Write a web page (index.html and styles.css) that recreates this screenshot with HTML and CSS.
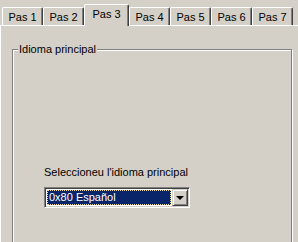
FILE: index.html
```html
<!DOCTYPE html>
<html lang="ca">

<head>
    <meta charset="UTF-8" />
    <title>Pas 3</title>
    <link rel="stylesheet" href="styles.css">
</head>

<body>

    <!-- pestanyes -->
    <div class="tabs">
        <div class="tab">Pas 1</div>
        <div class="tab">Pas 2</div>
        <div class="tab active">Pas 3</div>
        <div class="tab">Pas 4</div>
        <div class="tab">Pas 5</div>
        <div class="tab">Pas 6</div>
        <div class="tab">Pas 7</div>
    </div>

    <!-- contingut de la pestanya -->
    <div class="panel">
        <div class="group">
            <div class="legend">Idioma principal</div>
            <div class="field">
                <div class="field-label">Seleccioneu l'idioma principal</div>
                <div class="combo">
                    <div class="combo-value">0x80 Español</div>
                    <div class="combo-btn"><span class="arrow"></span></div>
                </div>
            </div>
        </div>
    </div>

</body>

</html>
```

FILE: styles.css
```css
html,
body {
    margin: 0;
    padding: 0;
    width: 298px;
    height: 242px;
    overflow: hidden;
    background-color: #d4d0c8;
    color: #000;
    font-family: "Liberation Sans", Arial, sans-serif;
    font-size: 11px;
    line-height: 13px;
}

/* pestanyes */
.tabs {
    display: flex;
    align-items: flex-end;
    height: 25px;
    padding-left: 2px;
}

.tab {
    box-sizing: border-box;
    width: 41px;
    height: 18px;
    padding-top: 3px;
    text-align: center;
    border-top: 1px solid #fff;
    border-left: 1px solid #fff;
    border-right: 1px solid #404040;
    border-radius: 2px 2px 0 0;
    box-shadow: inset -1px 0 0 #808080;
}

.tab.active {
    width: 45px;
    height: 22px;
    margin-bottom: -1px;
    padding-top: 3px;
    background-color: #d4d0c8;
    position: relative;
    z-index: 1;
}

/* panell */
.panel {
    box-sizing: border-box;
    width: 298px;
    height: 217px;
    overflow: hidden;
    border-top: 1px solid #fff;
    border-left: 1px solid #fff;
}

.group {
    display: flex;
    flex-direction: column;
    width: 280px;
    height: 200px;
    box-sizing: border-box;
    margin: 23px 0 0 11px;
    border: 1px solid #808080;
    box-shadow: 1px 1px 0 #fff, inset 1px 1px 0 #fff;
}

.legend {
    align-self: flex-start;
    margin: -7px 0 0 5px;
    padding: 0 1px;
    background-color: #d4d0c8;
}

.field {
    display: flex;
    flex-direction: column;
    align-items: flex-start;
    gap: 8px;
    padding: 110px 0 0 31px;
}

/* desplegable */
.combo {
    display: flex;
    box-sizing: border-box;
    width: 146px;
    height: 21px;
    padding: 1px;
    background-color: #fff;
    border-top: 1px solid #808080;
    border-left: 1px solid #808080;
    border-right: 1px solid #fff;
    border-bottom: 1px solid #fff;
    box-shadow: inset 1px 1px 0 #404040, inset -1px -1px 0 #d4d0c8;
}

.combo-value {
    flex: 1;
    margin: 1px;
    padding-left: 2px;
    line-height: 15px;
    background-color: #0a246a;
    color: #fff;
    outline: 1px dotted #e8d890;
    outline-offset: -1px;
}

.combo-btn {
    box-sizing: border-box;
    width: 16px;
    display: flex;
    align-items: center;
    justify-content: center;
    background-color: #d4d0c8;
    border-top: 1px solid #d4d0c8;
    border-left: 1px solid #d4d0c8;
    border-right: 1px solid #404040;
    border-bottom: 1px solid #404040;
    box-shadow: inset 1px 1px 0 #fff, inset -1px -1px 0 #808080;
}

.arrow {
    width: 0;
    height: 0;
    border-left: 4px solid transparent;
    border-right: 4px solid transparent;
    border-top: 4px solid #000;
}
```
